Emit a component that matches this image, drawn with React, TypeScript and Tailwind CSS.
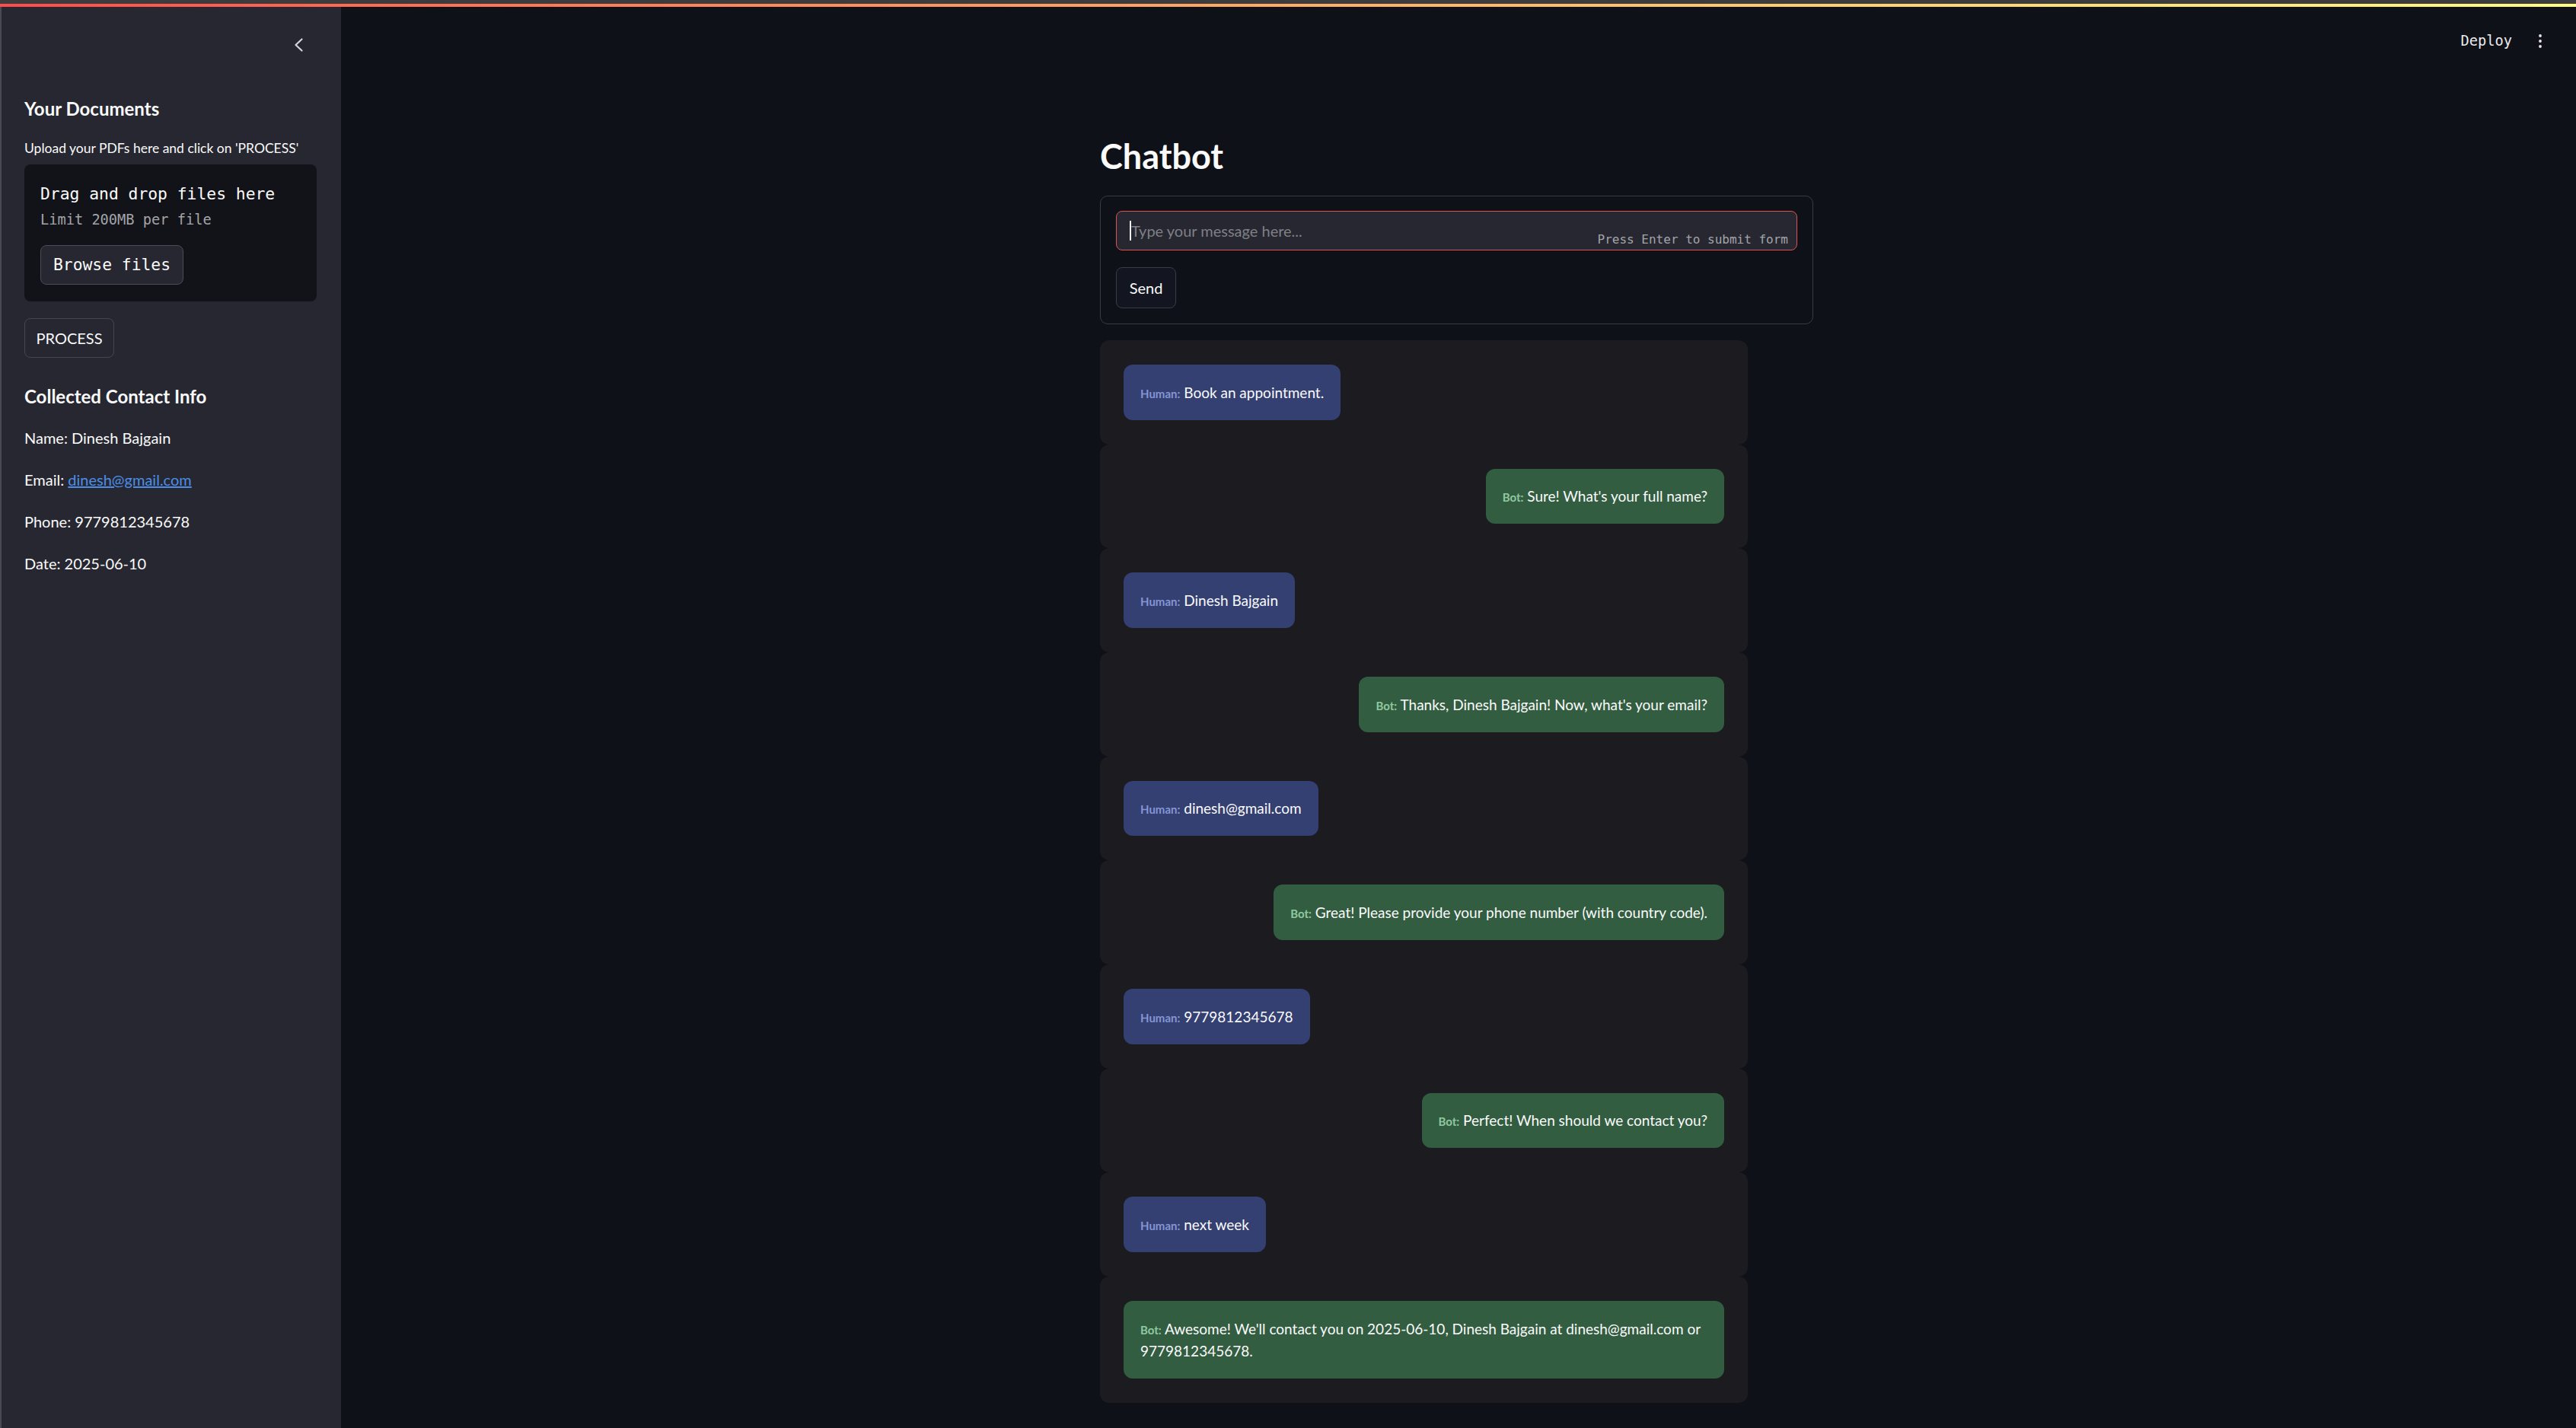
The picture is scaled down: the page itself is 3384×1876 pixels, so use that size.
import React from 'react';

type Message = { from: 'human' | 'bot'; text: string };

const messages: Message[] = [
  { from: 'human', text: 'Book an appointment.' },
  { from: 'bot', text: "Sure! What's your full name?" },
  { from: 'human', text: 'Dinesh Bajgain' },
  { from: 'bot', text: "Thanks, Dinesh Bajgain! Now, what's your email?" },
  { from: 'human', text: 'dinesh@gmail.com' },
  { from: 'bot', text: 'Great! Please provide your phone number (with country code).' },
  { from: 'human', text: '9779812345678' },
  { from: 'bot', text: 'Perfect! When should we contact you?' },
  { from: 'human', text: 'next week' },
  { from: 'bot', text: "Awesome! We'll contact you on 2025-06-10, Dinesh Bajgain at dinesh@gmail.com or 9779812345678." },
];

function Sidebar() {
  return (
    <aside className="w-[448px] shrink-0 bg-[#262730] border-l-2 border-[#4a4a50] pl-[30px] text-[#fafafa]">
      <div className="h-[100px] flex items-center justify-end pr-[49px]">
        <svg width="14" height="20" viewBox="0 0 14 20" fill="none">
          <path d="M11.5 2.5 L3.5 10 L11.5 17.5" stroke="#d6d6da" strokeWidth="2.2" strokeLinecap="round" strokeLinejoin="round" />
        </svg>
      </div>

      <h3 className="mt-[18px] text-[24px] leading-[32px] font-bold">Your Documents</h3>
      <p className="mt-[24px] text-[17.5px] leading-[24px]">Upload your PDFs here and click on 'PROCESS'</p>

      <div className="mt-[9px] w-[384px] h-[180px] rounded-[8px] bg-[#121319] pt-[25px] px-[21px] font-['DejaVu_Sans_Mono',monospace]">
        <div className="text-[21.33px] leading-[28px] text-[#fafafa]">Drag and drop files here</div>
        <div className="mt-[8px] text-[18.67px] leading-[24px] text-[#a3a4a8]">Limit 200MB per file</div>
        <button className="mt-[21px] h-[52px] w-[188px] rounded-[8px] border border-[#4b4c55] bg-[#262730] text-[21.33px] text-[#fafafa]">
          Browse files
        </button>
      </div>

      <button className="mt-[22px] h-[52px] w-[118px] rounded-[8px] border border-[#45464f] bg-[#262730] text-[20px] text-[#fafafa]">
        PROCESS
      </button>

      <h3 className="mt-[35px] text-[24px] leading-[32px] font-bold">Collected Contact Info</h3>
      <div className="mt-[24px] flex flex-col gap-[27px] text-[20px] leading-[28px]">
        <p>Name: Dinesh Bajgain</p>
        <p>
          Email: <a href="#" className="text-[#4c8ee6] underline">dinesh@gmail.com</a>
        </p>
        <p>Phone: 9779812345678</p>
        <p>Date: 2025-06-10</p>
      </div>
    </aside>
  );
}

function Bubble({ m }: { m: Message }) {
  const human = m.from === 'human';
  return (
    <div className={`flex px-[31px] py-[32px] bg-[#1b1b20] rounded-[12px] ${human ? 'justify-start' : 'justify-end'}`}>
      <div
        className={`rounded-[12px] px-[22px] py-[21.83px] leading-[29px] text-[19px] text-[#fafafa] ${
          human ? 'bg-[#343f72]' : 'bg-[#325d41]'
        }`}
      >
        <span className={`text-[15px] leading-none font-bold ${human ? 'text-[#8496d3]' : 'text-[#90c9a0]'}`}>
          {human ? 'Human:' : 'Bot:'}
        </span>{' '}
        {m.text}
      </div>
    </div>
  );
}

export default function App() {
  return (
    <div className="w-[3384px] h-[1876px] overflow-hidden flex flex-col bg-[#0e1117] font-['Lato',sans-serif]">
      <div className="h-[5px] bg-[#3c3c3f]" />
      <div className="h-[4px] bg-gradient-to-r from-[#ff4b4b] to-[#fffd80]" />

      <div className="flex flex-1 min-h-0">
        <Sidebar />

        <main className="flex-1 flex flex-col text-[#fafafa]">
          <header className="h-[89px] flex items-center justify-end gap-[34px] pr-[44px]">
            <span className="font-['DejaVu_Sans_Mono',monospace] text-[18.67px] text-[#eaeaec]">Deploy</span>
            <svg width="6" height="20" viewBox="0 0 6 20">
              <circle cx="3" cy="3" r="1.9" fill="#e6e6e8" />
              <circle cx="3" cy="10" r="1.9" fill="#e6e6e8" />
              <circle cx="3" cy="17" r="1.9" fill="#e6e6e8" />
            </svg>
          </header>

          <div className="ml-[997px] w-[937px]">
            <h1 className="mt-[79px] text-[45px] leading-[56px] font-bold">Chatbot</h1>

            <div className="mt-[24px] rounded-[10px] border border-[#3a3b42] px-[20px] pt-[19px] pb-[20px]">
              <div className="relative h-[52px] rounded-[8px] border border-[#e0524d] bg-[#262730] flex items-center pl-[17px]">
                <span className="w-[2px] h-[26px] bg-[#f0f0f0]" />
                <span className="text-[20px] leading-[28px] text-[#7f8086]">Type your message here...</span>
                <span className="absolute right-[11px] bottom-[5px] font-['DejaVu_Sans_Mono',monospace] text-[16px] leading-4 text-[#a3a4a8]">
                  Press Enter to submit form
                </span>
              </div>
              <button className="mt-[22px] h-[54px] w-[79px] rounded-[8px] border border-[#3a3b44] bg-[#131620] text-[20px] text-[#fafafa]">
                Send
              </button>
            </div>

            <div className="mt-[21px] w-[851px] flex flex-col">
              {messages.map((m, i) => (
                <Bubble key={i} m={m} />
              ))}
            </div>
          </div>
        </main>
      </div>
    </div>
  );
}
